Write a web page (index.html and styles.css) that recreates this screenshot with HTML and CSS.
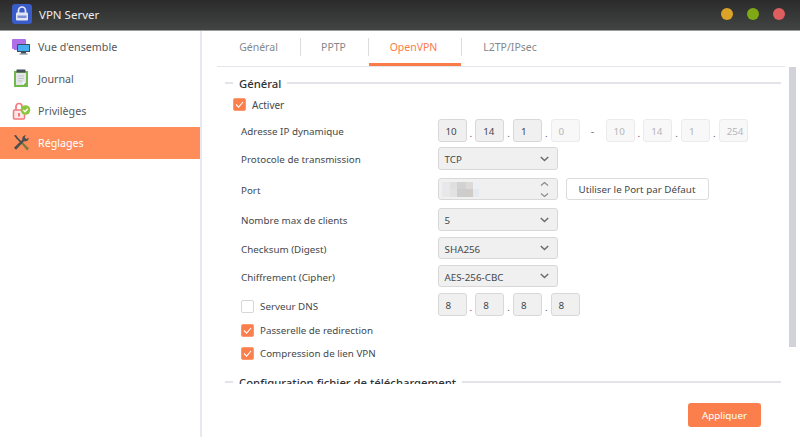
FILE: index.html
```html
<!DOCTYPE html>
<html lang="fr">
<head>
<meta charset="utf-8">
<title>VPN Server</title>
<link rel="stylesheet" href="styles.css">
</head>
<body>
<header class="titlebar">
  <svg class="app-icon" width="20" height="20" viewBox="0 0 20 20">
    <rect width="20" height="20" rx="3" fill="#3a5cc8"/>
    <path d="M6.500 9V6.500a3.500 3.500 0 0 1 7 0V9" fill="none" stroke="#e6e9f5" stroke-width="1.700"/>
    <rect x="4" y="8.500" width="12" height="8" rx="1" fill="#e3e6f4"/>
    <rect x="5.500" y="11.500" width="9" height="2.500" fill="#7d8fd4"/>
  </svg>
  <span class="app-title">VPN Server</span>
  <div class="win-controls">
    <span class="dot dot-min"></span>
    <span class="dot dot-max"></span>
    <span class="dot dot-close"></span>
  </div>
</header>
<div class="body">
  <nav class="sidebar">
    <a class="nav-item">
      <svg class="nav-icon" width="20" height="20" viewBox="0 0 20 20">
        <path d="M1 3a1 1 0 0 1 1-1h12a1 1 0 0 1 1 1v9H6v1H3v-1H2a1 1 0 0 1-1-1z" fill="#b06fe8"/>
        <rect x="6" y="7" width="13" height="8" rx="0.500" fill="#3d4d5c"/>
        <rect x="7" y="8" width="11" height="6" fill="#46aef0"/>
        <rect x="10" y="15" width="5" height="1.500" fill="#3d4d5c"/>
        <rect x="8.500" y="16.500" width="8" height="1" fill="#6b7680"/>
      </svg>
      <span class="nav-text">Vue d'ensemble</span>
    </a>
    <a class="nav-item">
      <svg class="nav-icon" width="20" height="20" viewBox="0 0 20 20">
        <rect x="3" y="2" width="14" height="16" fill="#72b84c"/>
        <path d="M5 4h10v9l-3 3H5z" fill="#e3e5e8"/>
        <path d="M12 16v-3h3z" fill="#fff"/>
        <rect x="5.500" y="0.500" width="9" height="3" fill="#47505a"/>
        <path d="M7 7h6M7 9.500h6M7 12h4" stroke="#c0c4c9" stroke-width="1"/>
      </svg>
      <span class="nav-text">Journal</span>
    </a>
    <a class="nav-item">
      <svg class="nav-icon" width="20" height="20" viewBox="0 0 20 20">
        <path d="M5 9V5.500a3 3 0 0 1 6 0V7" fill="none" stroke="#f4787d" stroke-width="1.700"/>
        <rect x="2.500" y="9" width="11" height="9" rx="1" fill="#fde6e7" stroke="#f4787d" stroke-width="1.500"/>
        <rect x="7" y="12" width="2" height="3.500" fill="#f4787d"/>
        <circle cx="14.500" cy="9" r="4.800" fill="#8cc63f"/>
        <path d="M12.300 9l1.700 1.700 2.800-3" fill="none" stroke="#fff" stroke-width="1.300"/>
      </svg>
      <span class="nav-text">Privilèges</span>
    </a>
    <a class="nav-item nav-active">
      <svg class="nav-icon" width="20" height="20" viewBox="0 0 20 20">
        <path d="M3 2.500l2-.5 2 3-1 1.200z" fill="#4a4d52"/>
        <path d="M5.500 5.500l1.200-1L12 10l-1.300 1.200z" fill="#4a4d52"/>
        <path d="M10.500 10.800l1.500-1.300 6 6-2 2z" fill="#7d7a3c"/>
        <path d="M18 4.800a4 4 0 0 1-5 3.400L5 16.800l-2-2 8.300-8a4 4 0 0 1 3.700-4.800l-1.400 2.300 1.700 1.700z" fill="#4a4d52"/>
      </svg>
      <span class="nav-text">Réglages</span>
    </a>
  </nav>
  <main class="main">
    <div class="tabs">
      <span class="tab tab-general">Général</span>
      <span class="tab-sep"></span>
      <span class="tab tab-pptp">PPTP</span>
      <span class="tab-sep"></span>
      <span class="tab tab-active">OpenVPN</span>
      <span class="tab-sep"></span>
      <span class="tab tab-l2tp">L2TP/IPsec</span>
    </div>
    <div class="content">
      <div class="scroll">
        <div class="section-head"><span class="section-title">Général</span></div>
        <label class="check check-top"><span class="box on"><svg width="13" height="13" viewBox="0 0 13 13"><path d="M3 6.500l2.600 2.600L10 4" fill="none" stroke="#fff" stroke-width="1.100"/></svg></span>Activer</label>

        <div class="row row-ip">
          <span class="label">Adresse IP dynamique</span>
          <div class="ip">
            <span class="cell">10</span><i class="pt">.</i><span class="cell">14</span><i class="pt">.</i><span class="cell">1</span><i class="pt">.</i><span class="cell off">0</span>
          </div>
          <span class="dash">-</span>
          <div class="ip">
            <span class="cell off">10</span><i class="pt">.</i><span class="cell off">14</span><i class="pt">.</i><span class="cell off">1</span><i class="pt">.</i><span class="cell off">254</span>
          </div>
        </div>
        <div class="row row-proto">
          <span class="label">Protocole de transmission</span>
          <div class="select"><span class="val">TCP</span><svg class="chev" width="9" height="6" viewBox="0 0 9 6"><path d="M.8 1l3.700 3.500L8.200 1" fill="none" stroke="#6a6d70" stroke-width="1.500"/></svg></div>
        </div>
        <div class="row row-port">
          <span class="label">Port</span>
          <div class="select spin">
            <span class="blur"><b class="b1"></b><b class="b2"></b></span>
            <svg class="spinner" width="9" height="17" viewBox="0 0 9 17"><path d="M1 4.500l3.500-3 3.500 3M1 12.500l3.500 3 3.500-3" fill="none" stroke="#85888b" stroke-width="1.100"/></svg>
          </div>
          <button class="btn">Utiliser le Port par Défaut</button>
        </div>
        <div class="row row-clients">
          <span class="label">Nombre max de clients</span>
          <div class="select"><span class="val">5</span><svg class="chev" width="9" height="6" viewBox="0 0 9 6"><path d="M.8 1l3.700 3.500L8.200 1" fill="none" stroke="#6a6d70" stroke-width="1.500"/></svg></div>
        </div>
        <div class="row row-sum">
          <span class="label">Checksum (Digest)</span>
          <div class="select"><span class="val">SHA256</span><svg class="chev" width="9" height="6" viewBox="0 0 9 6"><path d="M.8 1l3.700 3.500L8.200 1" fill="none" stroke="#6a6d70" stroke-width="1.500"/></svg></div>
        </div>
        <div class="row row-cipher">
          <span class="label">Chiffrement (Cipher)</span>
          <div class="select"><span class="val">AES-256-CBC</span><svg class="chev" width="9" height="6" viewBox="0 0 9 6"><path d="M.8 1l3.700 3.500L8.200 1" fill="none" stroke="#6a6d70" stroke-width="1.500"/></svg></div>
        </div>
        <div class="row row-dns">
          <label class="check check-in"><span class="box"></span>Serveur DNS</label>
          <div class="ip">
            <span class="cell">8</span><i class="pt">.</i><span class="cell">8</span><i class="pt">.</i><span class="cell">8</span><i class="pt">.</i><span class="cell">8</span>
          </div>
        </div>
        <label class="check check-sub check-gw"><span class="box on"><svg width="13" height="13" viewBox="0 0 13 13"><path d="M3 6.500l2.600 2.600L10 4" fill="none" stroke="#fff" stroke-width="1.100"/></svg></span>Passerelle de redirection</label>
        <label class="check check-sub check-lzo"><span class="box on"><svg width="13" height="13" viewBox="0 0 13 13"><path d="M3 6.500l2.600 2.600L10 4" fill="none" stroke="#fff" stroke-width="1.100"/></svg></span>Compression de lien VPN</label>
        <div class="section-head section-two"><span class="section-title">Configuration fichier de téléchargement</span></div>
      </div>
      <div class="scrollbar"></div>
    </div>
    <div class="footer"><button class="apply">Appliquer</button></div>
  </main>
</div>
</body>
</html>
```
FILE: styles.css
```css
* { box-sizing: border-box; }
html, body { margin: 0; height: 437px; overflow: hidden; }
body {
  font-family: "Noto Sans", "Open Sans", sans-serif;
  font-size: 9.8px;
  color: #45484c;
  background: #fff;
  display: flex;
  flex-direction: column;
}
.titlebar {
  height: 31px;
  flex: none;
  display: flex;
  align-items: center;
  padding: 0 11px 2px 12px;
  background: linear-gradient(#2b2b2b, #424444);
  border-bottom: 1px solid #9a9a9a;
}
.app-icon { flex: none; }
.app-title { margin-left: 7px; font-size: 11.500px; color: #eceded; }
.win-controls { margin-left: auto; display: flex; gap: 14px; padding-right: 4px; }
.dot { width: 12px; height: 12px; border-radius: 50%; }
.dot-min { background: #dba327; }
.dot-max { background: #7fa815; }
.dot-close { background: #de5e60; }
.body { flex: 1; display: flex; min-height: 0; }
.sidebar {
  width: 202px;
  flex: none;
  border-right: 2px solid #e8e8ee;
}
.nav-item {
  height: 32px;
  display: flex;
  align-items: center;
  padding-left: 11px;
  gap: 7px;
  font-size: 10.700px;
  color: #54575b;
}
.nav-text { margin-bottom: 1px; }
.nav-active { background: #fe8d59; color: #fff; }
.nav-icon { flex: none; }
.main { flex: 1; min-width: 0; display: flex; flex-direction: column; padding-left: 15px; }
.tabs {
  height: 36px;
  width: 568px;
  flex: none;
  display: flex;
  align-items: center;
  border-bottom: 1px solid #e4e4ea;
  color: #85888c;
  font-size: 10.500px;
}
.tab { height: 100%; display: flex; align-items: center; justify-content: center; padding-bottom: 3px; }
.tab-general { width: 83px; }
.tab-pptp { width: 67px; padding-right: 2px; }
.tab-active { width: 92px; color: #fb7c4b; border-bottom: 3px solid #fb7c4b; padding: 0 3px 0 0; }
.tab-l2tp { width: 92px; padding-left: 4px; }
.tab-sep { width: 1px; height: 18px; background: #dcdcdf; margin-top: -4px; }
.content { flex: none; height: 317px; display: flex; align-items: flex-start; }
.scroll { width: 564px; height: 317px; overflow: hidden; flex: none; }
.section-head {
  display: flex;
  align-items: center;
  height: 16px;
  margin-top: 8px;
  padding-left: 8px;
}
.section-head::before { content: ""; width: 8px; height: 2px; background: #e3e3ea; flex: none; }
.section-head::after { content: ""; flex: 1; height: 2px; background: #e3e3ea; }
.section-title {
  font-size: 11.300px;
  font-weight: 500;
  color: #2f3236;
  padding: 0 6px;
}
.section-two { margin-top: 14px; }
.check { display: flex; align-items: center; gap: 6px; }
.check-top { margin-top: 7px; margin-left: 16px; height: 13px; font-size: 10px; }
.check-sub { margin-left: 24px; height: 13px; }
.check-gw { margin-top: 8px; }
.check-lzo { margin-top: 10px; }
.box {
  width: 13px;
  height: 13px;
  flex: none;
  border: 1px solid #d6d6d8;
  border-radius: 2px;
  background: #fff;
  position: relative;
}
.box.on { background: #fb7f4c; border-color: #fb9a70; }
.box svg { position: absolute; left: -1px; top: -1px; }
.row { display: flex; align-items: center; height: 23px; padding-left: 24px; }
.row-ip { margin-top: 8px; }
.row-proto { margin-top: 5px; }
.row-port { margin-top: 8px; height: 22px; }
.row-clients { margin-top: 8px; }
.row-sum { margin-top: 6px; height: 22px; }
.row-cipher { margin-top: 6px; height: 22px; }
.row-dns { margin-top: 6px; }
.label { width: 196.500px; flex: none; padding-top: 2px; }
.check-in { width: 196.500px; flex: none; padding-top: 4px; }
.ip { display: flex; align-items: center; }
.cell {
  width: 29px;
  height: 23px;
  border: 1px solid #d8d8d8;
  border-radius: 3px;
  background: #f0f0f0;
  display: flex;
  align-items: center;
  padding: 2px 0 0 7px;
  color: #45484c;
}
.cell.off { background: #f8f8f8; border-color: #ebebeb; color: #b4b6b8; }
.pt { width: 8.700px; text-align: center; font-style: normal; line-height: 1; padding-top: 6px; color: #55585c; }
.dash { width: 26px; text-align: center; color: #7d8084; font-size: 11px; }
.select {
  width: 120px;
  height: 100%;
  border: 1px solid #d8d8d8;
  border-radius: 3px;
  background: #f0f0f0;
  display: flex;
  align-items: center;
  justify-content: space-between;
  padding: 0 8px 0 6px;
}
.val { padding-top: 2px; }
.blur { display: block; width: 37px; height: 15px; position: relative; filter: blur(0.7px); margin-left: -3px; }
.blur b { position: absolute; display: block; left: 0; width: 37px; height: 8px; }
.b1 {
  top: 0;
  background: linear-gradient(90deg, #e8e8ea 0 8px, #dfdfe0 8px 15px, #d2d2d3 15px 24px, #dcdad8 24px 31px, #ecf0f4 31px);
}
.b2 {
  top: 7px;
  background: linear-gradient(90deg, #e8e8ea 0 8px, #e2e2e3 8px 15px, #cdcdce 15px 24px, #cfccc8 24px 31px, #e6eaf0 31px);
}
.btn {
  margin-left: 8px;
  width: 143px;
  height: 100%;
  border: 1px solid #dcdcdc;
  border-radius: 3px;
  background: #fff;
  font: inherit;
  color: #45484c;
  padding: 0;
}
.scrollbar { width: 7px; height: 280px; margin-left: 8px; background: #d2d2d9; }
.footer { flex: 1; display: flex; justify-content: flex-end; padding: 19px 39px 0 0; }
.apply {
  width: 73px;
  height: 24px;
  border: 0;
  border-radius: 3px;
  background: #fb7f4c;
  color: #fff;
  font: inherit;
  padding: 0;
}
```
